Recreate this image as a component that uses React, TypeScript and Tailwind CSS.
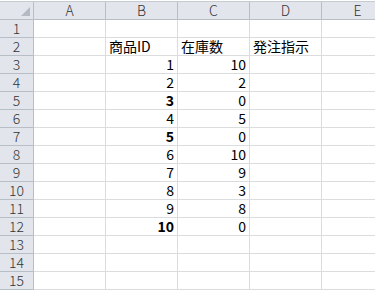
const columns = ["A", "B", "C", "D", "E"];

type Cell = { text: string; bold?: boolean; right?: boolean };

const data: Record<number, Record<string, Cell>> = {
  2: {
    B: { text: "商品ID" },
    C: { text: "在庫数" },
    D: { text: "発注指示" },
  },
};

const ids = [1, 2, 3, 4, 5, 6, 7, 8, 9, 10];
const stock = [10, 2, 0, 5, 0, 10, 9, 3, 8, 0];
ids.forEach((id, i) => {
  data[i + 3] = {
    B: { text: String(id), bold: stock[i] === 0, right: true },
    C: { text: String(stock[i]), right: true },
  };
});

const rows = Array.from({ length: 15 }, (_, i) => i + 1);

const font = { fontFamily: '"MS PGothic", "Noto Sans CJK JP", "Liberation Sans", sans-serif' };

const App = () => {
  return (
    <div className="w-[375px] h-[290px] overflow-hidden bg-white text-black" style={font}>
      <div className="h-[2px] bg-white border-b border-[#c6cbd1]" />
      <div className="flex h-[18px]">
        <div className="w-[34px] shrink-0 bg-[#e2e6ec] border-r border-b border-[#b8bec6] relative">
          <svg className="absolute right-[3px] bottom-[3px]" width="9" height="9" viewBox="0 0 9 9">
            <polygon points="9,0 9,9 0,9" fill="#b4bac2" />
          </svg>
        </div>
        {columns.map((c) => (
          <div
            key={c}
            className="w-[72px] shrink-0 bg-[#e2e6ec] border-r border-b border-[#b8bec6] flex items-center justify-center text-[14px] leading-[17px] font-light text-[#333]"
          >
            {c}
          </div>
        ))}
      </div>
      {rows.map((r) => (
        <div key={r} className="flex h-[18px]">
          <div className="w-[34px] shrink-0 bg-[#e2e6ec] border-r border-b border-[#b8bec6] flex items-center justify-center text-[14px] leading-[17px] font-light text-[#333]">
            {r}
          </div>
          {columns.map((c) => {
            const cell = data[r]?.[c];
            return (
              <div
                key={c}
                className={`w-[72px] shrink-0 border-r border-b border-[#dadcdd] flex items-center px-[3px] text-[14px] leading-[17px] whitespace-nowrap ${
                  cell?.right ? "justify-end" : "justify-start"
                } ${cell?.bold ? "font-bold" : "font-normal"}`}
              >
                {cell?.text}
              </div>
            );
          })}
        </div>
      ))}
    </div>
  );
};

export default App;
